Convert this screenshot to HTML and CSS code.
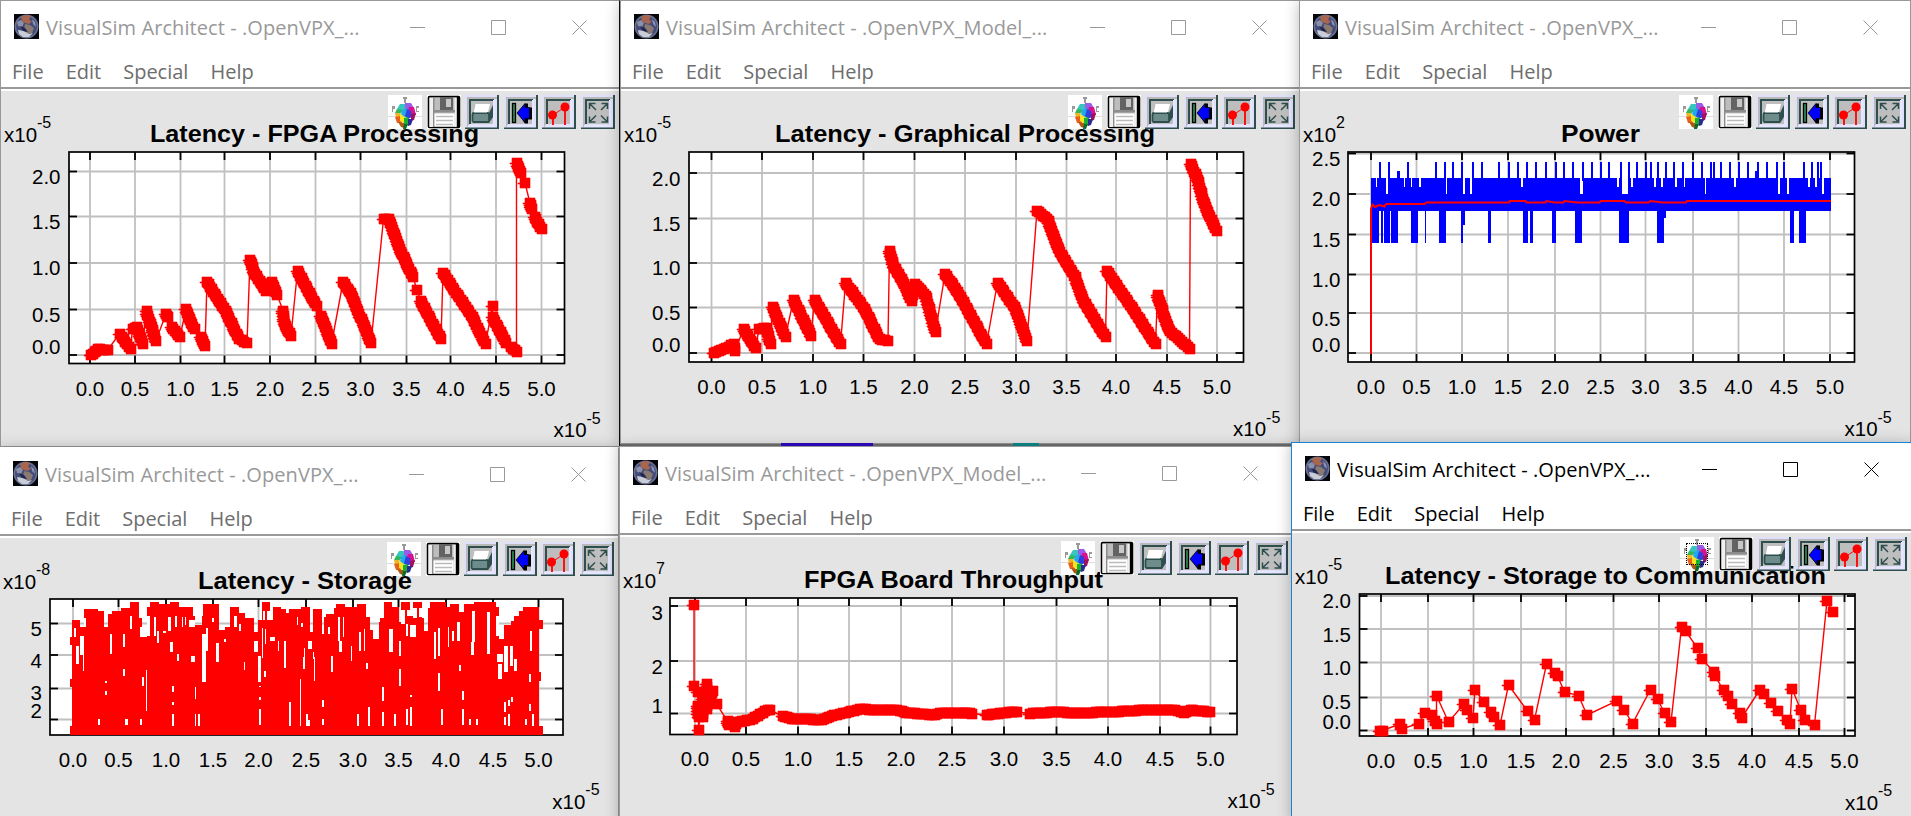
FILE: index.html
```html
<!DOCTYPE html>
<html lang="en">
<head>
    <meta charset="UTF-8">
    <meta name="viewport" content="width=device-width, initial-scale=1.0">
    <title>VisualSim Architect</title>
    <link rel="stylesheet" href="styles.css">
</head>
<body>

    <svg class="sprite">
        <symbol id="earth" viewBox="0 0 25 25">
            <rect width="25" height="25" fill="#05060a"/>
            <circle cx="12.5" cy="12.5" r="12" fill="#6b7292"/>
            <circle cx="12.5" cy="12.5" r="10.5" fill="#434b78"/>
            <path d="M7 3l5-2 5 1-2 4 3 1-3 3-4-1-3-2z" fill="#a8664f"/>
            <path d="M3 8l4-2 3 3-2 4-4-1z" fill="#8b90a8"/>
            <path d="M11 10l5 1 4 3-2 5-4 1-4-4z" fill="#8a7a72"/>
            <path d="M4 16l6 1 5 3 4-1-4 4-6 0-4-3z" fill="#c9cdd8"/>
            <path d="M18 5l3 3 1 5-3-3z" fill="#8a93b5"/>
            <path d="M6 12l5 2 3 4-5-1z" fill="#20264f"/>
        </symbol>
        <symbol id="palette" viewBox="0 0 34 34">
            <rect width="34" height="34" fill="#fff"/>
            <path d="M0 21.5h34" stroke="#ddd"/>
            <path d="M15 2h4v2h-1v4h-2v-4h-1zM4 11h3v3h-2v3h-1zM28 11h3v2h-2v3h2v1h-3z" fill="#999"/>
            <path d="M12 9h6v8h-7l-2-3z" fill="#36c6c0"/>
            <path d="M17 8h6l3 5-3 3-6-2z" fill="#9a5be8"/>
            <path d="M21 12h5l2 8h-5l-3-4z" fill="#d6128e"/>
            <path d="M9 14l6 1-3 4-5-1z" fill="#35b55a"/>
            <path d="M7 18l5 0 2 5-6 0z" fill="#f0b62a"/>
            <path d="M14 15l5-2 2 7-5 3-3-4z" fill="#22a9e8"/>
            <path d="M7 22l6-1 1 7-5 0z" fill="#e8601a"/>
            <path d="M12 19l5 3-1 6-4-2z" fill="#f5e422"/>
            <path d="M19 14l4 2 1 6-4 2-3-3z" fill="#3040e0"/>
            <path d="M23 19l5-1-2 7-3 1z" fill="#a01060"/>
            <path d="M16 23l4-1 2 5-3 4-3-2z" fill="#18b030"/>
            <path d="M20 24l5 0-2 6-3 1z" fill="#2a2a90"/>
            <path d="M10 27l6 1 0 5-3-1z" fill="#b05a10"/>
            <path d="M16 29l4 0-2 5-3 0z" fill="#0c6b2a"/>
        </symbol>
        <symbol id="save" viewBox="0 0 34 34">
            <rect width="34" height="34" fill="#fff"/>
            <rect x="1.5" y="1.5" width="31" height="31" rx="1" fill="#bdbdbd" stroke="#000" stroke-width="1.6"/>
            <path d="M31 2v30" stroke="#000" stroke-width="2.4"/>
            <path d="M2.5 3h3.500v29h-3.500zM27.500 3h2v29h-2z" fill="#f0f0f0"/>
            <path d="M6 3h1.500v29h-1.500zM7 15h21v2.500h-21z" fill="#8c8c8c"/>
            <path d="M13 2h13v13h-13z" fill="#636363"/>
            <path d="M19 4h5v8h-5z" fill="#c8c8c8"/>
            <path d="M7.500 18.500h20v13h-20z" fill="#fff"/>
            <path d="M9 21.500h17M9 25.500h17M9 29.500h17" stroke="#bbb" stroke-width="1.5"/>
        </symbol>
        <!-- bevelled face shared by the four plot buttons -->
        <symbol id="face" viewBox="0 0 34 34">
            <rect width="34" height="34" fill="#e0e0fb"/>
            <path d="M0 34v-1.500h32v-32.500h2v34z" fill="#2f4f4f"/>
            <path d="M2 2h30v2h-28v28h-2z" fill="#b9b9b9"/>
            <rect x="5" y="5" width="24" height="24" fill="#bebebe"/>
            <path d="M5 29v-24h24" fill="none" stroke="#2f4f4f" stroke-width="2"/>
            <path d="M29 5v26h-26" fill="none" stroke="#e6e6ff" stroke-width="2"/>
        </symbol>
        <symbol id="print" viewBox="0 0 34 34">
            <use href="#face"/>
            <path d="M11.500 9h13.500l-2 8h-14z" fill="#fff"/>
            <path d="M8 18h16l4-8v12l-4 6h-16z" fill="#2f4f4f"/>
            <rect x="7.500" y="18" width="16.500" height="9" rx="1.500" fill="#6f8c8c" stroke="#2f4f4f" stroke-width="1.800"/>
            <path d="M10.500 9h13.500l-2 8.500h-13z" fill="#fff"/>
        </symbol>
        <symbol id="reset" viewBox="0 0 34 34">
            <use href="#face"/>
            <rect x="8.500" y="8.500" width="3" height="19" fill="#2e8b57" stroke="#000" stroke-width="1.300"/>
            <path d="M14 18l7-8.500v-1h3v4h4v12h-4v4h-3z" fill="#000"/>
            <path d="M13 18l8-9.500v4h4.500v11h-4.500v4z" fill="#00f" stroke="#000" stroke-width=".8"/>
        </symbol>
        <symbol id="stems" viewBox="0 0 34 34">
            <use href="#face"/>
            <path d="M11 20v10M23 12v18" stroke="#f00" stroke-width="1.800"/>
            <path d="M11 20l12-8" stroke="#f00"/>
            <circle cx="10.500" cy="20" r="4.500" fill="#f00"/>
            <circle cx="23" cy="12" r="4.500" fill="#f00"/>
        </symbol>
        <symbol id="fill" viewBox="0 0 34 34">
            <use href="#face"/>
            <path d="M8.500 14v-5.500h6M8.500 8.500l6.500 6.500M26.500 14v-5.500h-6M26.500 8.500l-6.500 6.500M8.500 21.500v5.500h6M8.500 27l6.500-6.500M26.500 21.500v5.500h-6M26.500 27l-6.500-6.500" fill="none" stroke="#2f4f4f" stroke-width="1.500"/>
        </symbol>
    </svg>

    <div class="desktop">
        <div class="scrap scrap-blue"></div>
        <div class="scrap scrap-teal"></div>
        <div class="window fpga" id="fpga" data-title="VisualSim Architect - .OpenVPX_..."></div>
        <div class="window storage" id="storage" data-title="VisualSim Architect - .OpenVPX_..."></div>
        <div class="window graphical" id="graphical" data-title="VisualSim Architect - .OpenVPX_Model_..."></div>
        <div class="window throughput" id="throughput" data-title="VisualSim Architect - .OpenVPX_Model_..."></div>
        <div class="window power" id="power" data-title="VisualSim Architect - .OpenVPX_..."></div>
        <div class="window communication active" id="communication" data-title="VisualSim Architect - .OpenVPX_..."></div>
    </div>

    <script src="app.js"></script>
</body>
</html>
```

FILE: styles.css
```css
body {
    margin: 0;
    overflow: hidden;
    font-family: "Open Sans", "Noto Sans", sans-serif;
}

.sprite {
    position: absolute;
    width: 0;
    height: 0;
}

.desktop {
    position: relative;
    width: 1911px;
    height: 816px;
    background-color: #858585;
    overflow: hidden;
}

.scrap {
    position: absolute;
    top: 443px;
    height: 3px;
    z-index: 1;
}

.scrap-blue {
    left: 781px;
    width: 92px;
    background-color: #2a08b4;
}

.scrap-teal {
    left: 1013px;
    width: 26px;
    background-color: #0b7f80;
}

.window {
    position: absolute;
    display: flex;
    flex-direction: column;
    box-sizing: border-box;
    background-color: #e4e4e4;
    border: 1px solid #999;
    color: #999;
    overflow: hidden;
    box-shadow: 0 2px 14px rgba(0, 0, 0, 0.28);
}

.fpga {
    left: 0;
    top: 0;
    width: 620px;
    height: 447px;
    border-right-color: #111;
}

.graphical {
    left: 620px;
    top: 0;
    width: 680px;
    height: 444px;
}

.power {
    left: 1299px;
    top: 0;
    width: 612px;
    height: 446px;
}

.storage {
    left: -1px;
    top: 447px;
    width: 620px;
    height: 380px;
    border-top-color: #fff;
}

.throughput {
    left: 619px;
    top: 446px;
    width: 674px;
    height: 380px;
}

.communication {
    left: 1291px;
    top: 442px;
    width: 621px;
    height: 380px;
}

.active {
    color: #000;
    border-color: #1883d7;
}

.titlebar {
    display: flex;
    align-items: center;
    height: 51px;
    flex: none;
    padding: 0 32px 0 13px;
    background-color: #fff;
}

.titlebar .earth {
    width: 25px;
    height: 25px;
}

.caption {
    margin-left: 7px;
    font-size: 20px;
    line-height: 28px;
    letter-spacing: 0.08px;
    white-space: pre;
    padding-top: 2px;
}

.controls {
    display: flex;
    gap: 66px;
    margin-left: auto;
    padding-top: 2px;
}

.throughput .controls {
    margin-right: 2px;
}

.controls svg {
    width: 15px;
    height: 15px;
    fill: none;
    stroke: currentColor;
}

.menubar {
    display: flex;
    gap: 22px;
    height: 35px;
    flex: none;
    padding-left: 11px;
    background-color: #fff;
    border-bottom: 2px solid #999;
    color: #6d6d6d;
    font-size: 20px;
    line-height: 39px;
}

.active .menubar {
    color: #000;
}

.canvas {
    position: relative;
    flex: 1;
    border-top: 2px solid #fff;
}

.plot {
    position: absolute;
    left: 0;
    top: 0;
    width: 100%;
    height: 100%;
    overflow: visible;
    font-family: "Liberation Sans", Arial, sans-serif;
    fill: #000;
}

.tick-text {
    font-size: 20.5px;
}

.sup {
    font-size: 16px;
}

.plot-title {
    font-size: 23.5px;
    font-weight: bold;
}

.toolbar {
    position: absolute;
    top: 4px;
    right: 4px;
    display: flex;
    gap: 4.6px;
}

.toolbar svg {
    width: 34px;
    height: 34px;
}

.active .toolbar svg:first-child {
    outline: 1px dotted #000;
    outline-offset: -7px;
}
```

FILE: app.js
```js
const MARK = 11;
const X_LABELS = ['0.0', '0.5', '1.0', '1.5', '2.0', '2.5', '3.0', '3.5', '4.0', '4.5', '5.0'];

// Every plot keeps its own grid: origin + scale turn grid units into page pixels.
// Runs are polylines; a marker is repeated every few pixels along each of them.
const plots = {
    fpga: {
        win: [0, 0], origin: [0, 0], scale: 2.529,
        title: 'Latency - FPGA Processing', titleX: [151, 478],
        exp: '-5', expX: 554, expY: 436.7,
        frame: [175, 454, 1427, 1089], xBase: 1187, yRight: 150,
        xt: [228, 341, 457, 568, 683, 798, 912, 1028, 1139, 1254, 1369],
        yt: [[513, '2.0', 551], [648, '1.5', 686], [787, '1.0', 824], [927, '0.5', 964], [1063, '0.0', 1059]],
        runs: [
            [230, 1063, 248, 1045, 272, 1048], [302, 1000], [308, 1010, 330, 1046],
            [335, 985, 346, 980, 360, 1030], [370, 932, 395, 1020], [420, 940, 424, 950],
            [434, 980, 455, 1008], [470, 925, 492, 985], [508, 1008, 518, 1036],
            [523, 845, 570, 930, 605, 1015, 625, 1027], [632, 777, 645, 820, 672, 870, 686, 845, 700, 882],
            [716, 930, 720, 970, 736, 1005], [752, 812, 800, 915], [812, 945, 838, 1030],
            [868, 845, 890, 885, 938, 1028], [970, 655, 982, 655, 1012, 745, 1045, 830], [1055, 868],
            [1064, 900, 1115, 1015], [1120, 818, 1195, 950, 1228, 1030], [1245, 916], [1245, 950, 1280, 1026],
            [1292, 1040, 1306, 1053], [1306, 487, 1318, 518], [1328, 548], [1341, 608, 1345, 625], [1352, 650, 1369, 685]
        ]
    },
    graphical: {
        win: [620, 0], origin: [620, 0], scale: 2.306,
        title: 'Latency - Graphical Processing', titleX: [776, 1154],
        exp: '-5', expX: 613.6, expY: 435.7,
        frame: [159, 454, 1438, 1084], xBase: 1181, yRight: 137,
        xt: [211, 327, 445, 562, 679, 796, 913, 1030, 1144, 1261, 1377],
        yt: [[517, '2.0', 556], [654, '1.5', 691], [787, '1.0', 824], [921, '0.5', 959], [1058, '0.0', 1054]],
        runs: [
            [216, 1057, 240, 1046, 262, 1030, 265, 1050], [285, 986, 312, 1042],
            [321, 986, 338, 982, 347, 1030], [352, 918, 382, 1008], [400, 897, 440, 1005],
            [448, 897, 508, 1030], [520, 848, 565, 925, 598, 1015, 618, 1020],
            [622, 750, 632, 800, 650, 835, 672, 900, 680, 850, 706, 885, 727, 993],
            [750, 820, 780, 875, 845, 1030], [870, 846, 910, 920, 938, 1020],
            [962, 630, 988, 660, 1015, 755, 1050, 830, 1070, 905, 1120, 1008],
            [1123, 812, 1180, 920, 1235, 1030], [1240, 882, 1265, 985, 1290, 1018, 1313, 1046],
            [1316, 489, 1330, 530, 1350, 620, 1376, 690]
        ]
    },
    communication: {
        win: [1291, 442], origin: [1285, 435], scale: 2.505,
        title: 'Latency - Storage to Communication', titleX: [1386, 1825],
        exp: '-5', expX: 554.5, expY: 367,
        frame: [187, 476, 1428, 901], xBase: 998, yRight: 163,
        xt: [240, 358, 472, 591, 704, 823, 937, 1054, 1170, 1288, 1401],
        yt: [[481, '2.0', 518], [580, '1.5', 618], [681, '1.0', 719], [786, '0.5', 821], [885, '0.0', 880]],
        points: [237, 885, 244, 885, 288, 865, 292, 880, 336, 864, 349, 832, 368, 838, 374, 855, 380, 864, 380, 780,
            410, 860, 448, 806, 455, 822, 471, 847, 476, 763, 498, 800, 516, 828, 524, 843, 538, 868, 560, 748,
            607, 826, 625, 853, 655, 685, 675, 712, 683, 721, 700, 769, 735, 780, 757, 838, 830, 796, 849, 822,
            871, 864, 915, 762, 933, 790, 951, 832, 967, 860, 993, 575, 1003, 586, 1033, 637, 1045, 670,
            1073, 708, 1077, 721, 1099, 764, 1109, 782, 1120, 806, 1140, 832, 1144, 847, 1190, 762, 1200, 775,
            1217, 801, 1235, 826, 1256, 853, 1265, 864, 1270, 759, 1291, 822, 1301, 853, 1327, 868,
            1358, 496, 1371, 528]
    },
    throughput: {
        win: [619, 446], origin: [620, 440], scale: 2.306,
        title: 'FPGA Board Throughput', titleX: [805, 1102],
        exp: '7', bottomExp: '-5', expX: 609, expY: 361.7,
        frame: [115, 472, 1423, 882], xBase: 977, yRight: 97,
        xt: [173, 290, 410, 528, 648, 766, 886, 1007, 1125, 1245, 1362],
        yt: [[497, '3', 537], [661, '2', 701], [819, '1', 817]],
        runs: [
            [171, 493], [171, 735], [180, 755], [180, 795, 181, 830], [181, 868], [190, 757, 190, 830], [200, 730, 201, 805],
            [206, 770, 214, 752], [222, 790], [248, 842, 250, 852], [265, 858, 270, 845, 300, 838, 340, 808, 345, 808],
            [375, 826, 395, 834, 465, 838, 500, 822, 560, 804, 580, 808, 645, 810, 660, 816, 725, 823, 745, 816, 790, 816, 812, 819],
            [845, 823, 890, 816, 915, 814],
            [945, 819, 1010, 815, 1050, 817, 1130, 814, 1190, 810, 1280, 808, 1300, 816, 1315, 809, 1360, 815]
        ]
    },
    power: {
        win: [1299, 0], origin: [1290, 0], scale: 2.525,
        title: 'Power', titleX: [1562, 1639],
        exp: '2', bottomExp: '-5', expX: 546, expY: 435.7,
        frame: [147, 454, 1425, 1084], xBase: 1181, yRight: 125,
        xt: [204, 320, 434, 550, 669, 784, 898, 1017, 1133, 1247, 1363],
        yt: [[459, '2.5', 497], [580, '2.0', 617], [702, '1.5', 738], [822, '1.0', 859], [937, '0.5', 975], [1058, '0.0', 1055]],
        band: {
            body: [203, 531, 1366, 630],
            notches: [[217, 220, 558], [242, 247, 580], [288, 290, 558], [306, 308, 558], [326, 331, 558], [393, 396, 580],
                [437, 442, 580], [454, 460, 580], [583, 588, 558], [732, 738, 580], [826, 831, 558], [837, 854, 580],
                [861, 866, 558], [918, 924, 558], [937, 942, 558], [972, 977, 558], [994, 997, 558], [1047, 1050, 580],
                [1121, 1126, 558], [1232, 1237, 580], [1254, 1260, 580], [1307, 1313, 558], [1326, 1330, 558], [1342, 1348, 580]],
            spikes: [227, 249, 297, 368, 391, 412, 434, 462, 483, 528, 553, 575, 598, 621, 646, 670, 692, 713, 740,
                762, 784, 806, 834, 855, 876, 898, 911, 928, 950, 970, 992, 1017, 1040, 1063, 1070, 1087, 1110, 1133,
                1155, 1181, 1204, 1228, 1247, 1296, 1318, 1332, 1341],
            drops: [[207, 225], [230, 235], [237, 252], [255, 273], [306, 323], [341, 343], [376, 394], [432, 437],
                [500, 508], [588, 601], [606, 614], [662, 672], [720, 737], [831, 856], [927, 944], [1262, 1273], [1285, 1303]],
            mean: [204, 1060, 204, 625, 208, 612, 215, 620, 225, 614, 238, 618, 242, 611, 340, 611, 345, 606, 553, 606,
                556, 601, 595, 601, 597, 606, 645, 606, 648, 601, 668, 606, 690, 606, 693, 601, 725, 606, 782, 606,
                785, 601, 845, 601, 848, 606, 905, 606, 910, 601, 940, 606, 1000, 606, 1003, 601, 1366, 601]
        }
    },
    storage: {
        win: [-1, 447], origin: [40, 590], scale: 3,
        title: 'Latency - Storage', titleX: [199, 411],
        exp: '-8', bottomExp: '-5', expX: 553.8, expY: 361.3,
        frame: [30, 26, 1569, 434], xBase: 530, yRight: 3,
        xt: [99, 236, 378, 519, 655, 798, 939, 1075, 1218, 1359, 1495],
        yt: [[99, '5', 135], [193, '4', 231], [294, '3', 328], [387, '2', 383]],
        // upper edge of the filled trace as x, y steps
        skyline: [96, 88, 118, 110, 132, 55, 172, 60, 192, 110, 202, 70, 215, 62, 243, 53, 270, 34, 297, 82, 304, 138,
            319, 50, 328, 34, 355, 40, 390, 34, 417, 48, 458, 75, 464, 102, 486, 75, 488, 40, 536, 118, 555, 108,
            570, 48, 597, 68, 615, 82, 641, 125, 653, 88, 664, 34, 690, 88, 697, 48, 722, 55, 737, 66, 747, 55,
            783, 48, 810, 125, 817, 55, 845, 130, 850, 80,
            858, 70, 880, 52, 888, 40, 914, 50, 951, 40, 978, 80, 989, 118, 998, 145, 1015, 95, 1020, 82, 1032, 34,
            1055, 50, 1076, 95, 1083, 34, 1109, 75, 1119, 34, 1145, 82, 1152, 122, 1162, 52, 1168, 34, 1216, 50,
            1230, 40, 1256, 65, 1272, 40, 1300, 34, 1368, 48, 1377, 145, 1392, 102, 1412, 90, 1420, 75, 1435, 60,
            1448, 50, 1497, 405, 1508, 432],
        blocks: [[88, 139, 23, 24], [88, 265, 23, 25], [88, 405, 23, 27], [1484, 88, 24, 28], [1484, 245, 18, 25]],
        gaps: [[108, 165, 8, 55], [102, 112, 4, 26], [118, 137, 14, 55], [128, 192, 4, 50], [132, 82, 6, 28], [208, 130, 6, 60],
            [249, 130, 6, 40], [270, 76, 4, 40], [300, 108, 4, 30], [319, 75, 9, 62], [341, 80, 7, 55], [350, 122, 5, 35],
            [367, 122, 10, 5], [383, 80, 8, 40], [390, 155, 9, 30], [404, 75, 5, 35], [411, 190, 5, 22], [424, 80, 3, 28],
            [434, 80, 4, 24], [447, 88, 18, 22], [453, 195, 12, 20], [486, 130, 10, 145], [515, 82, 6, 12], [528, 158, 8, 55],
            [498, 112, 4, 68], [550, 144, 8, 9], [582, 75, 9, 34], [595, 100, 6, 20], [641, 152, 13, 32], [654, 195, 9, 78],
            [664, 112, 5, 90], [669, 60, 6, 28], [679, 60, 11, 28], [675, 115, 3, 45], [690, 140, 14, 10], [712, 152, 5, 28], [670, 240, 6, 18],
            [732, 150, 6, 82], [770, 80, 3, 22], [782, 96, 6, 14], [790, 172, 5, 60], [804, 150, 12, 26], [820, 200, 5, 70],
            [174, 384, 6, 20], [255, 384, 8, 20], [300, 384, 6, 20], [306, 258, 5, 27], [318, 237, 3, 123], [396, 285, 6, 20],
            [396, 333, 6, 9], [396, 369, 6, 36], [465, 290, 3, 35], [465, 369, 3, 36], [474, 369, 6, 36], [657, 285, 6, 5],
            [657, 318, 6, 9], [657, 354, 6, 50], [747, 333, 6, 72], [780, 264, 3, 141], [797, 369, 5, 36], [249, 235, 6, 20],
            [195, 270, 6, 6], [195, 300, 6, 12], [612, 215, 3, 22], [804, 387, 6, 18],
            [894, 80, 4, 70], [896, 150, 9, 35], [908, 80, 4, 60], [931, 165, 3, 45], [957, 125, 6, 55], [970, 115, 4, 65], [873, 195, 6, 48],
            [864, 108, 5, 22], [789, 200, 6, 34], [818, 185, 4, 20], [846, 328, 6, 20], [846, 384, 6, 20], [951, 369, 6, 36],
            [984, 348, 6, 57], [978, 216, 6, 18], [1026, 290, 6, 42], [1026, 363, 6, 42], [1047, 115, 10, 70], [1062, 369, 6, 36],
            [1077, 150, 6, 45], [1077, 235, 5, 50], [1098, 354, 6, 50], [1110, 348, 6, 57], [1110, 312, 6, 8], [1083, 58, 12, 42],
            [1099, 58, 10, 18], [1097, 100, 6, 35], [1110, 102, 16, 36], [1119, 52, 11, 30], [1136, 52, 9, 26], [1182, 125, 6, 80],
            [1194, 112, 6, 84], [1194, 248, 6, 52], [1203, 354, 6, 50], [1222, 110, 4, 60], [1236, 120, 5, 32], [1250, 95, 8, 55],
            [1257, 222, 6, 20], [1266, 300, 6, 27], [1266, 354, 6, 50], [1287, 384, 6, 20], [1308, 384, 6, 20],
            [1292, 155, 10, 38], [1294, 60, 10, 95], [1341, 65, 7, 125], [1368, 75, 9, 62], [1371, 190, 18, 25], [1374, 220, 10, 45],
            [1392, 165, 12, 78], [1410, 165, 8, 60], [1420, 205, 11, 35], [1392, 333, 6, 30], [1392, 380, 6, 24], [1404, 327, 6, 20],
            [1404, 369, 6, 36], [1413, 320, 6, 15], [1455, 384, 6, 20], [1476, 369, 6, 36], [1467, 250, 6, 25], [1467, 340, 6, 20],
            [1470, 120, 5, 60]]
    }
};

const MENUS = ['File', 'Edit', 'Special', 'Help'];
const TOOLS = ['palette', 'save', 'print', 'reset', 'stems', 'fill'];

function rect(x1, y1, x2, y2, color) {
    return `<rect x="${x1}" y="${y1}" width="${x2 - x1}" height="${y2 - y1}" fill="${color}"/>`;
}

function line(x1, y1, x2, y2, color, width) {
    return `<path d="M${x1} ${y1}L${x2} ${y2}" stroke="${color}" stroke-width="${width}"/>`;
}

function drawPlot(p) {
    // the canvas starts 91px under the window's top edge, 1px inside its border
    const X = v => Math.round((p.origin[0] + v / p.scale - p.win[0] - 1) * 2) / 2;
    const Y = v => Math.round((p.origin[1] + v / 3 - p.win[1] - 90.5) * 2) / 2;
    const [l, t, r, b] = [X(p.frame[0]), Y(p.frame[1]), X(p.frame[2]), Y(p.frame[3])];
    let out = rect(l, t, r, b, '#fff');

    p.xt.forEach(v => out += line(X(v), t, X(v), b, '#c0c0c0', 1.8));
    p.yt.forEach(v => out += line(l, Y(v[0]), r, Y(v[0]), '#c0c0c0', 1.8));
    p.xt.forEach((v, i) => {
        out += line(X(v), t, X(v), t + 8, '#000', 1.8) + line(X(v), b - 8, X(v), b, '#000', 1.8);
        out += `<text class="tick-text" text-anchor="middle" x="${X(v)}" y="${Y(p.xBase)}">${X_LABELS[i]}</text>`;
    });
    p.yt.forEach(v => {
        out += line(l, Y(v[0]), l + 8, Y(v[0]), '#000', 1.8) + line(r - 8, Y(v[0]), r, Y(v[0]), '#000', 1.8);
        out += `<text class="tick-text" text-anchor="end" x="${X(p.yRight) + 1}" y="${Y(v[2])}">${v[1]}</text>`;
    });
    out += `<rect x="${l}" y="${t}" width="${r - l}" height="${b - t}" fill="none" stroke="#000" stroke-width="1.7"/>`;

    if (p.band) out += drawBand(p.band, X, Y);
    else if (p.skyline) out += drawSkyline(p, X, Y);
    else out += drawTrace(p, X, Y);

    const tx = p.titleX[0] - p.win[0] - 1;
    out += `<text class="plot-title" x="${tx - 1}" y="51" textLength="${p.titleX[1] - p.titleX[0] + 2}" lengthAdjust="spacingAndGlyphs">${p.title}</text>`;
    out += `<text class="tick-text" x="3" y="51">x10</text><text class="sup" x="36" y="37">${p.exp}</text>`;
    out += `<text class="tick-text" x="${p.expX - 1.5}" y="${p.expY - 90.5}">x10</text>`;
    out += `<text class="sup" x="${p.expX + 31.5}" y="${p.expY - 104}">${p.bottomExp || p.exp}</text>`;
    return out;
}

function drawTrace(p, X, Y) {
    let d = '', marks = '';
    const mark = (x, y) => marks += `M${Math.round(x) - 5} ${Math.round(y) - 5}h${MARK - 1}v10h-${MARK - 1}zm-2 5h2v1h-2z`;
    const runs = p.runs || [p.points];
    runs.forEach(run => {
        for (let i = 0; i < run.length; i += 2) {
            const x = X(run[i]), y = Y(run[i + 1]);
            d += `${d ? 'L' : 'M'}${x} ${y}`;
            mark(x, y);
            if (p.runs && i) {
                const px = X(run[i - 2]), py = Y(run[i - 1]);
                const n = Math.ceil(Math.hypot(x - px, y - py) / 3);
                for (let k = 1; k < n; k++) mark(px + (x - px) * k / n, py + (y - py) * k / n);
            }
        }
    });
    return `<path d="${d}" fill="none" stroke="#f00" stroke-width="1.4"/><path d="${marks}" fill="#f00" stroke="#f00" stroke-width=".6"/>`;
}

function drawBand(b, X, Y) {
    let out = '<g shape-rendering="crispEdges">';
    out += rect(X(b.body[0]), Y(b.body[1]), X(b.body[2]), Y(b.body[3]), '#00f');
    b.notches.forEach(n => out += rect(X(n[0]), Y(b.body[1]) - 1, X(n[1]), Y(n[2]), '#fff'));
    b.spikes.forEach(s => out += rect(X(s) - 1, Y(483), X(s) + 1, Y(540), '#00f'));
    out += rect(X(270), Y(510), X(277), Y(540), '#00f') + rect(X(1174), Y(510), X(1182), Y(540), '#00f');
    b.drops.forEach(s => out += rect(X(s[0]), Y(630), X(s[1]), Y(726), '#00f'));
    out += rect(X(437), Y(630), X(441), Y(672), '#00f') + rect(X(944), Y(630), X(949), Y(651), '#00f');
    let d = '';
    for (let i = 0; i < b.mean.length; i += 2) d += `${d ? 'L' : 'M'}${X(b.mean[i])} ${Y(b.mean[i + 1])}`;
    return out + `</g><path d="${d}" fill="none" stroke="#f00" stroke-width="2"/>`;
}

function drawSkyline(p, X, Y) {
    let out = '<g shape-rendering="crispEdges">';
    const s = p.skyline;
    for (let i = 0; i < s.length - 2; i += 2) {
        out += rect(X(s[i]), Y(s[i + 1]), X(s[i + 2]), Y(432), '#f00');
    }
    p.gaps.forEach(g => out += rect(X(g[0]), Y(g[1]), X(g[0] + g[2]), Y(g[1] + g[3]), '#fff'));
    p.blocks.forEach(g => out += rect(X(g[0]), Y(g[1]), X(g[0] + g[2]), Y(g[1] + g[3]), '#f00'));
    return out + '</g>';
}

for (const id in plots) {
    const win = document.getElementById(id);
    win.innerHTML = `
        <div class="titlebar">
            <svg class="earth"><use href="#earth"/></svg>
            <div class="caption">${win.dataset.title}</div>
            <div class="controls">
                <svg><path d="M0 7.500h15"/></svg>
                <svg><path d="M.5 .5h14v14h-14z"/></svg>
                <svg><path d="M.5 .5l14 14M14.500 .5l-14 14"/></svg>
            </div>
        </div>
        <div class="menubar">${MENUS.map(m => `<span>${m}</span>`).join('')}</div>
        <div class="canvas">
            <svg class="plot">${drawPlot(plots[id])}</svg>
            <div class="toolbar">${TOOLS.map(t => `<svg><use href="#${t}"/></svg>`).join('')}</div>
        </div>`;
}
```
